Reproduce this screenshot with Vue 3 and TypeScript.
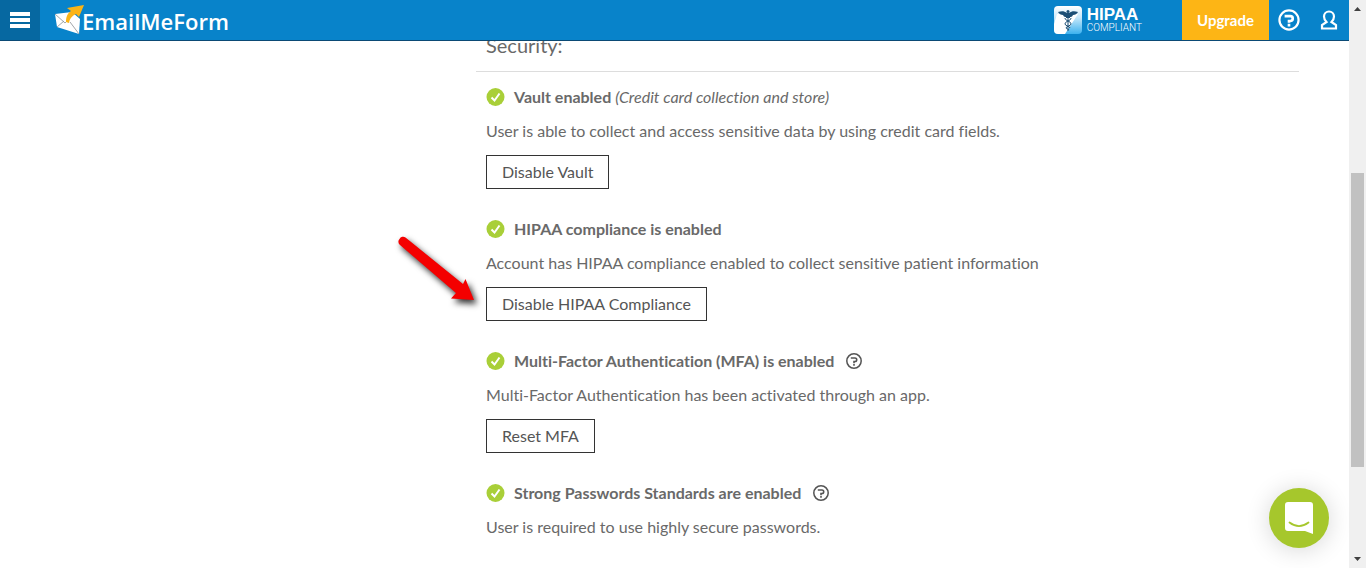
<script setup lang="ts">
interface Setting {
  id: string
  title: string
  note?: string
  text: string
  action?: string
  help?: boolean
  pointed?: boolean
}

const settings: Setting[] = [
  {
    id: 'vault',
    title: 'Vault enabled',
    note: '(Credit card collection and store)',
    text: 'User is able to collect and access sensitive data by using credit card fields.',
    action: 'Disable Vault',
  },
  {
    id: 'hipaa',
    title: 'HIPAA compliance is enabled',
    text: 'Account has HIPAA compliance enabled to collect sensitive patient information',
    action: 'Disable HIPAA Compliance',
    pointed: true,
  },
  {
    id: 'mfa',
    title: 'Multi-Factor Authentication (MFA) is enabled',
    text: 'Multi-Factor Authentication has been activated through an app.',
    action: 'Reset MFA',
    help: true,
  },
  {
    id: 'passwords',
    title: 'Strong Passwords Standards are enabled',
    text: 'User is required to use highly secure passwords.',
    help: true,
  },
]
</script>

<template>
  <div class="window">
    <div class="page">
      <header class="topbar">
        <button class="menu" type="button" aria-label="Menu">
          <svg width="20" height="16" viewBox="0 0 20 16"><path d="M0 0h20v4H0zM0 6h20v4H0zM0 12h20v4H0z" fill="#fff" /></svg>
        </button>
        <a class="brand" href="#">
          <svg width="30" height="30" viewBox="0 0 30 30" aria-hidden="true">
            <path d="M0 9 17 7l8 7-1 15L2 22z" fill="#fff" />
            <path d="M0 9l10 9 3-3M2 22l7-6M24 29l-9-12" fill="none" stroke="#8a8f94" stroke-width="0.8" />
            <path d="M11 17c0-6 2-9 5-11l-4-3 17-3-5 12-3-3c-4 2-6 4-7 9z" fill="#fbb416" />
          </svg>
          <span>EmailMeForm</span>
        </a>
        <a class="hipaa" href="#">
          <svg width="28" height="28" viewBox="0 0 28 28" aria-hidden="true">
            <defs>
              <linearGradient id="tile" x1="0" y1="0" x2="0" y2="1">
                <stop offset="0" stop-color="#fff" />
                <stop offset="0.4" stop-color="#c9e9fa" />
                <stop offset="1" stop-color="#3db2ef" />
              </linearGradient>
            </defs>
            <rect width="28" height="28" rx="4" fill="url(#tile)" />
            <path d="M0 18 3 8h21L11 28H4a4 4 0 0 1-4-4z" fill="#fff" />
            <path d="M4 6c4-1 6-1 9 1h2c3-2 5-2 9-1-1 2-3 3-5 3-1 2-2 2-3 2v1h-4v-1c-1 0-2 0-3-2-2 0-4-1-5-3z" fill="#1d4f75" />
            <circle cx="14" cy="5.500" r="1.500" fill="#1d4f75" />
            <path d="M14 7v18M11 12c0 3 6 3 6 6 0 2-5 2-5 4 0 1 3 1 3 2M17 12c0 3-6 3-6 6 0 2 5 2 5 4" fill="none" stroke="#1d4f75" stroke-width="1" />
          </svg>
          <span class="hipaa-text"><strong>HIPAA</strong><span>COMPLIANT</span></span>
        </a>
        <button class="upgrade" type="button">Upgrade</button>
        <button class="tool" type="button" aria-label="Help">
          <svg width="22" height="22" viewBox="0 0 20 20" fill="none" stroke="#fff">
            <circle cx="10" cy="10" r="8.700" stroke-width="2" />
            <path d="M6 6.500h5.200a2.200 2.200 0 0 1 0 4.400H10v1.600M10 13.500v2.300" stroke-width="2.400" />
          </svg>
        </button>
        <button class="tool" type="button" aria-label="Account">
          <svg width="18" height="20" viewBox="0 0 18 20" fill="none" stroke="#fff" stroke-width="2.200">
            <path d="M6.500 12C5 10.500 4 8.800 4 6.500a5 5 0 0 1 10 0c0 2.300-1 4-2.500 5.500l4.500 3v3.500H2V15z" />
          </svg>
        </button>
      </header>

      <main class="content">
        <h2>Security:</h2>
        <section v-for="s in settings" :key="s.id" class="setting">
          <h3>
            <svg class="check" width="19" height="18" viewBox="0 0 19 18" aria-hidden="true">
              <circle cx="9.500" cy="9" r="9" fill="#a9cf38" />
              <path d="M5.500 9.500l3 3 5-7" fill="none" stroke="#fff" stroke-width="2" />
            </svg>
            <span>{{ s.title }} <em v-if="s.note">{{ s.note }}</em></span>
            <button v-if="s.help" class="help" type="button" aria-label="More information">
              <svg width="16" height="16" viewBox="0 0 20 20" fill="none" stroke="#555">
                <circle cx="10" cy="10" r="9" stroke-width="1.900" />
                <path d="M6 6.300h5.200a2.200 2.200 0 0 1 0 4.400H10v2M10 13.800v2.200" stroke-width="2" />
              </svg>
            </button>
          </h3>
          <p>{{ s.text }}</p>
          <div v-if="s.action" class="action">
            <button type="button">{{ s.action }}</button>
            <svg v-if="s.pointed" class="arrow" width="100" height="90" viewBox="0 0 100 90" aria-hidden="true">
              <path d="M13.500 12a4 4 0 0 1 6-1.500L77 57l2.500-5L88 73l-23-1.500 5-5.500-56-48a4 4 0 0 1-.5-6z" fill="#f40000" />
            </svg>
          </div>
        </section>
      </main>

      <button class="chat" type="button" aria-label="Open chat">
        <svg width="28" height="32" viewBox="0 0 28 32">
          <path d="M3 0h22a3 3 0 0 1 3 3v29l-8-3H3a3 3 0 0 1-3-3V3a3 3 0 0 1 3-3z" fill="#fff" />
          <path d="M4.500 20.500c6 4.500 13 4.500 19 0" fill="none" stroke="#a6c72c" stroke-width="1.800" stroke-linecap="round" />
        </svg>
      </button>
    </div>

    <div class="scrollbar" aria-hidden="true">
      <svg width="7" height="4" viewBox="0 0 7 4"><path d="M0 4 3.500 0 7 4z" fill="#404040" /></svg>
      <div class="track"><div class="thumb"></div></div>
      <svg width="7" height="4" viewBox="0 0 7 4"><path d="M0 0h7L3.500 4z" fill="#404040" /></svg>
    </div>
  </div>
</template>

<style>
body {
  margin: 0;
  background: #fff;
}
</style>

<style scoped>
.window {
  display: flex;
  height: 100vh;
  overflow: hidden;
  font-family: Lato, "Liberation Sans", sans-serif;
  font-size: 16px;
  line-height: 24px;
  font-variant-ligatures: none;
  color: #696969;
}
.page {
  flex: 1;
  min-width: 0;
  display: flex;
  flex-direction: column;
  position: relative;
}
button {
  font: inherit;
  border: 0;
  padding: 0;
  cursor: pointer;
  background: none;
}
svg {
  display: block;
  flex: none;
}
.topbar {
  display: flex;
  flex: none;
  align-items: stretch;
  height: 40px;
  background: #0883ca;
  border-bottom: 1px solid #0b4a75;
  z-index: 1;
}
.menu {
  width: 40px;
  display: grid;
  place-items: center;
  background: #0668a1;
}
.brand {
  display: flex;
  align-items: center;
  margin-left: 15px;
  color: #fff;
  text-decoration: none;
  font: 600 22px/32px "Open Sans", sans-serif;
}
.brand span {
  margin: 2px 0 0 -3px;
}
.hipaa {
  display: flex;
  align-items: center;
  gap: 5px;
  margin-left: auto;
  margin-right: 40px;
  color: #fff;
  text-decoration: none;
  font-family: "Liberation Sans", sans-serif;
}
.hipaa-text {
  display: flex;
  flex-direction: column;
  font-size: 10px;
  line-height: 11px;
}
.hipaa-text strong {
  font-size: 17px;
  line-height: 15px;
}
.hipaa-text span {
  font-family: Roboto, sans-serif;
  font-weight: 300;
}
.upgrade {
  width: 87px;
  background: #fdb515;
  color: #fff;
  font-weight: 700;
  font-size: 15px;
}
.tool {
  width: 40px;
  display: grid;
  place-items: center;
}
.content {
  flex: 1;
  min-height: 0;
  padding: 0 50px 0 476px;
}
h2 {
  margin: -10px 0 13px;
  padding: 0 10px 12px;
  font-size: 20px;
  line-height: 28px;
  font-weight: 400;
  border-bottom: 1px solid #ddd;
}
.setting {
  padding: 0 10px;
  margin-bottom: 28px;
}
h3 {
  display: flex;
  align-items: center;
  margin: 0;
  font-size: 16px;
  font-weight: 700;
}
.check {
  margin-right: 9px;
}
h3 em {
  font-weight: 400;
}
.help {
  margin-left: 12px;
}
p {
  margin: 10px 0 12px;
}
.action {
  position: relative;
}
.action button {
  display: block;
  height: 34px;
  padding: 0 15px;
  border: 1px solid #333;
  background: #fff;
  color: #555;
}
.arrow {
  position: absolute;
  left: -100px;
  top: -60px;
  overflow: visible;
  filter: drop-shadow(3px 4px 3px rgba(0, 0, 0, 0.8));
}
.chat {
  position: absolute;
  right: 20px;
  bottom: 20px;
  width: 60px;
  height: 60px;
  border-radius: 50%;
  display: grid;
  place-items: center;
  background: #a6c72c;
  box-shadow: 0 2px 24px rgba(0, 0, 0, 0.16);
}
.scrollbar {
  width: 17px;
  display: flex;
  flex-direction: column;
  align-items: center;
  justify-content: space-between;
  box-sizing: border-box;
  padding: 7px 0;
  background: #f0f0f0;
}
.track {
  flex: 1;
  width: 13px;
  margin: 6px 0;
}
.thumb {
  height: 55%;
  margin-top: 156px;
  background: #c1c1c1;
}
</style>
